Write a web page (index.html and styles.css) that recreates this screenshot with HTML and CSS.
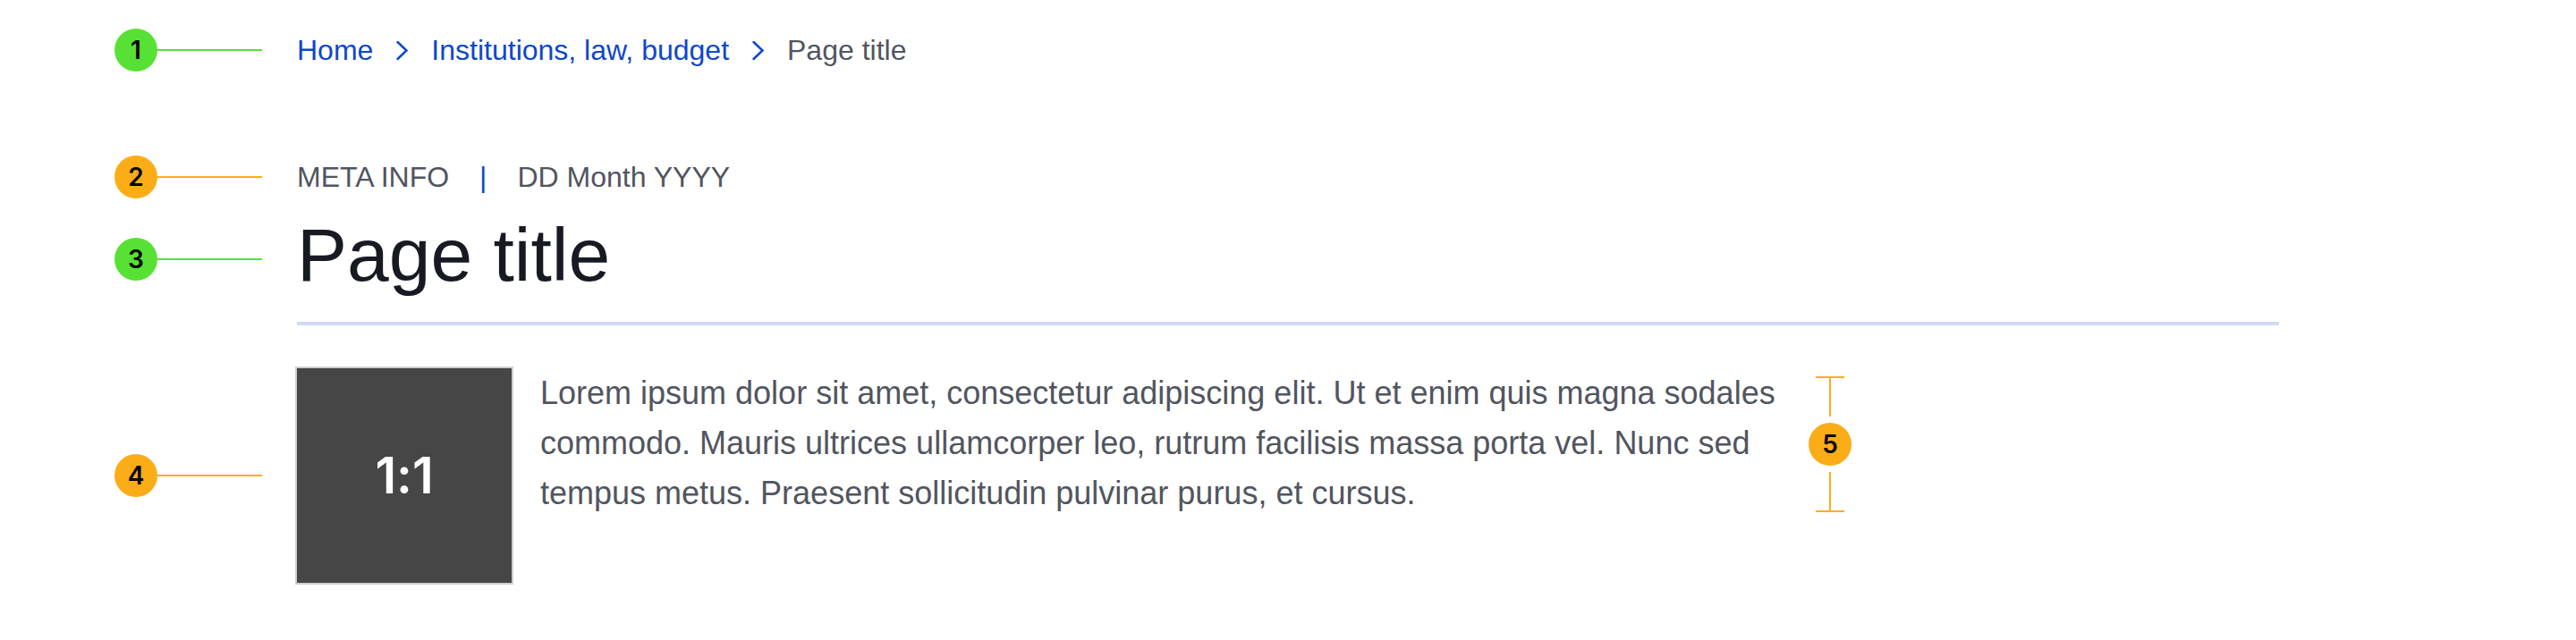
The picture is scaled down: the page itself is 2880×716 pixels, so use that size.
FILE: index.html
```html
<!DOCTYPE html>
<html lang="en">
<head>
<meta charset="utf-8">
<title>Page title</title>
<link rel="stylesheet" href="styles.css">
</head>
<body>
<main class="page">
  <div class="row">
    <div class="marker green"><span class="badge">1</span><span class="lead"></span></div>
    <nav class="crumbs" aria-label="Breadcrumb">
      <a href="#">Home</a>
      <svg class="chevron" viewBox="0 0 25 24" aria-hidden="true"><path d="M7.500 3 L17.500 12.500 L7.500 22"/></svg>
      <a href="#">Institutions, law, budget</a>
      <svg class="chevron" viewBox="0 0 25 24" aria-hidden="true"><path d="M7.500 3 L17.500 12.500 L7.500 22"/></svg>
      <span aria-current="page">Page title</span>
    </nav>
  </div>
  <div class="row row-meta">
    <div class="marker orange"><span class="badge">2</span><span class="lead"></span></div>
    <div class="meta"><span>META INFO</span><span class="bar">|</span><span>DD Month YYYY</span></div>
  </div>
  <div class="row row-title">
    <div class="marker green"><span class="badge">3</span><span class="lead"></span></div>
    <h1 class="title">Page title</h1>
  </div>
  <hr class="rule">
  <div class="row">
    <div class="marker orange"><span class="badge">4</span><span class="lead"></span></div>
    <div class="intro">
      <div class="thumb">1:1</div>
      <p class="lorem">Lorem ipsum dolor sit amet, consectetur adipiscing elit. Ut et enim quis magna sodales commodo. Mauris ultrices ullamcorper leo, rutrum facilisis massa porta vel. Nunc sed tempus metus. Praesent sollicitudin pulvinar purus, et cursus.</p>
      <div class="measure orange"><span class="arm arm-top"></span><span class="badge">5</span><span class="arm arm-bottom"></span></div>
    </div>
  </div>
</main>
</body>
</html>
```
FILE: styles.css
```css
* { box-sizing: border-box; }
body {
  margin: 0;
  background: #fff;
  color: #515560;
  font: 32px/48px "Liberation Sans", Arial, sans-serif;
}
.page { padding: 32px 332px 32px 128px; }
.row {
  display: grid;
  grid-template-columns: 165px minmax(0, 1fr);
  column-gap: 39px;
  align-items: center;
}
.row-meta { margin-top: 94px; }
.row-title { margin-top: 15px; }
.green { --mark: #58e135; }
.orange { --mark: #fbad18; }
.marker { display: flex; align-items: center; }
.badge {
  flex: none;
  width: 48px;
  height: 48px;
  border-radius: 50%;
  background: var(--mark);
  color: #000;
  font: 600 28px/48px Inter, sans-serif;
  text-align: center;
}
.lead { flex: 1; height: 2px; background: var(--mark); }
.crumbs { display: flex; align-items: center; gap: 20px; }
.crumbs a { color: #0e47cb; text-decoration: none; }
.chevron {
  width: 25px;
  height: 24px;
  fill: none;
  stroke: #0e47cb;
  stroke-width: 2.5;
  stroke-linecap: round;
}
.meta { display: flex; gap: 34px; }
.bar { color: #0e47cb; }
.title {
  margin: 0;
  padding-bottom: 10px;
  color: #171a22;
  font-size: 84px;
  font-weight: 400;
  line-height: 96px;
}
.rule {
  margin: 17px 0 48px 204px;
  border: 0;
  height: 4px;
  background: #cfdaf5;
}
.intro { display: flex; align-items: flex-start; gap: 32px; }
.thumb {
  display: grid;
  place-items: center;
  flex: none;
  width: 240px;
  height: 240px;
  background: #464646;
  box-shadow: 0 0 0 2px #cfcfcf;
  color: #fff;
  font: 600 56px/64px Inter, sans-serif;
  font-feature-settings: "calt" 0;
  font-kerning: none;
}
.lorem {
  margin: 0;
  max-width: 1386px;
  font-size: 36px;
  line-height: 56px;
}
.measure {
  flex: none;
  display: flex;
  flex-direction: column;
  align-items: center;
  gap: 7px;
  padding-top: 9px;
}
.arm {
  width: 32px;
  height: 45px;
  background: linear-gradient(var(--mark), var(--mark)) center / 2px 100% no-repeat;
}
.arm-top { border-top: 2px solid var(--mark); }
.arm-bottom { border-bottom: 2px solid var(--mark); }
```
